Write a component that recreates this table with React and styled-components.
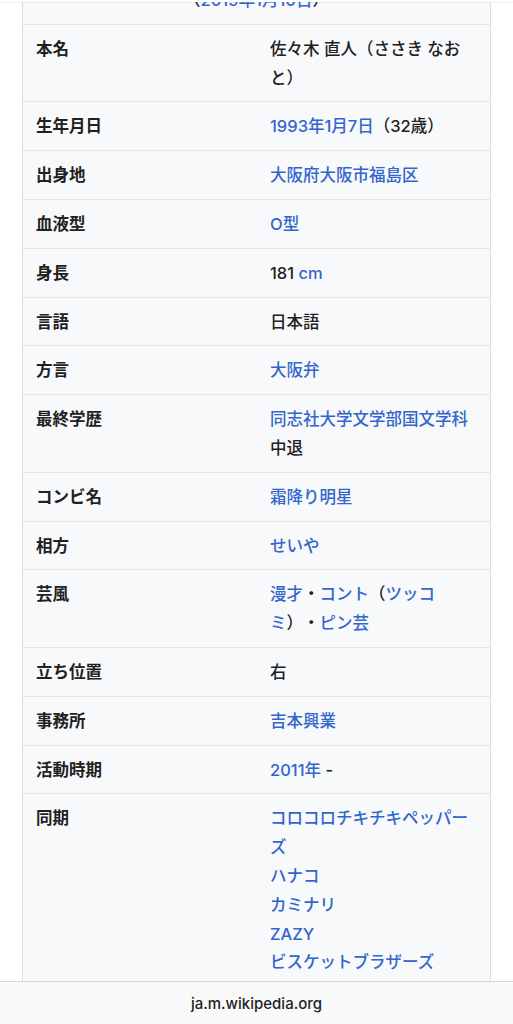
import React from 'react';
import styled, { createGlobalStyle } from 'styled-components';

const GlobalStyle = createGlobalStyle`
  html, body {
    margin: 0;
    padding: 0;
    background: #ffffff;
  }
  body {
    font-family: Inter, "Noto Sans CJK JP", sans-serif;
    color: #202122;
    overflow: hidden;
    text-spacing-trim: space-all;
  }
`;

const Page = styled.div`
  height: 1024px;
  overflow: hidden;
  padding: 0 22px;
`;

const TopStrip = styled.div`
  position: fixed;
  top: 0;
  left: 0;
  right: 0;
  height: 2px;
  background: #ffffff;
  box-shadow: 0 1px 1px rgba(0, 0, 0, 0.06);
  z-index: 2;
`;

const Infobox = styled.div`
  margin-top: -24px;
  display: grid;
  grid-template-columns: 234px 1fr;
  background: #f8f9fa;
  border-left: 1px solid #dcdee2;
  border-right: 1px solid #dcdee2;
  font-size: 16.5px;
  line-height: 28.8px;
`;

const Caption = styled.div`
  grid-column: 1 / -1;
  text-align: center;
  padding: 10px 13px 9px;
  font-weight: 500;
`;

const Label = styled.div`
  border-top: 1px solid #e3e5e8;
  padding: 10px 13px 9px;
  font-weight: 700;
`;

const Value = styled.div`
  border-top: 1px solid #e3e5e8;
  padding: 10px 15px 9px 13px;
  font-weight: 500;
`;

const A = styled.span`
  color: #3366cc;
`;

const Line = styled.div``;

const BottomBar = styled.div`
  position: fixed;
  left: 0;
  right: 0;
  bottom: 0;
  height: 42px;
  background: #f9f9f9;
  border-top: 1px solid #d8d8d8;
  display: flex;
  align-items: center;
  justify-content: center;
  font-family: Inter, "Liberation Sans", sans-serif;
  font-size: 15px;
  font-weight: 500;
  color: #1f1f1f;
  z-index: 2;
`;

const rows = [
  ['本名', <>佐々木 直人（ささき なおと）</>],
  ['生年月日', <><A>1993年1月7日</A>（32歳）</>],
  ['出身地', <A>大阪府大阪市福島区</A>],
  ['血液型', <A>O型</A>],
  ['身長', <>181 <A>cm</A></>],
  ['言語', <>日本語</>],
  ['方言', <A>大阪弁</A>],
  ['最終学歴', <><A>同志社大学文学部国文学科</A>中退</>],
  ['コンビ名', <A>霜降り明星</A>],
  ['相方', <A>せいや</A>],
  ['芸風', <><A>漫才</A>・<A>コント</A>（<A>ツッコミ</A>）・<A>ピン芸</A></>],
  ['立ち位置', <>右</>],
  ['事務所', <A>吉本興業</A>],
  ['活動時期', <><A>2011年</A> -</>],
];

const peers = ['コロコロチキチキペッパーズ', 'ハナコ', 'カミナリ', 'ZAZY', 'ビスケットブラザーズ'];

export default function App() {
  return (
    <>
      <GlobalStyle />
      <TopStrip />
      <Page>
        <Infobox>
          <Caption>
            （<A>2019年1月10日</A>）
          </Caption>
          {rows.map(([label, value]) => (
            <React.Fragment key={label}>
              <Label>{label}</Label>
              <Value>{value}</Value>
            </React.Fragment>
          ))}
          <Label>同期</Label>
          <Value>
            {peers.map((p) => (
              <Line key={p}>
                <A>{p}</A>
              </Line>
            ))}
          </Value>
        </Infobox>
      </Page>
      <BottomBar>ja.m.wikipedia.org</BottomBar>
    </>
  );
}
